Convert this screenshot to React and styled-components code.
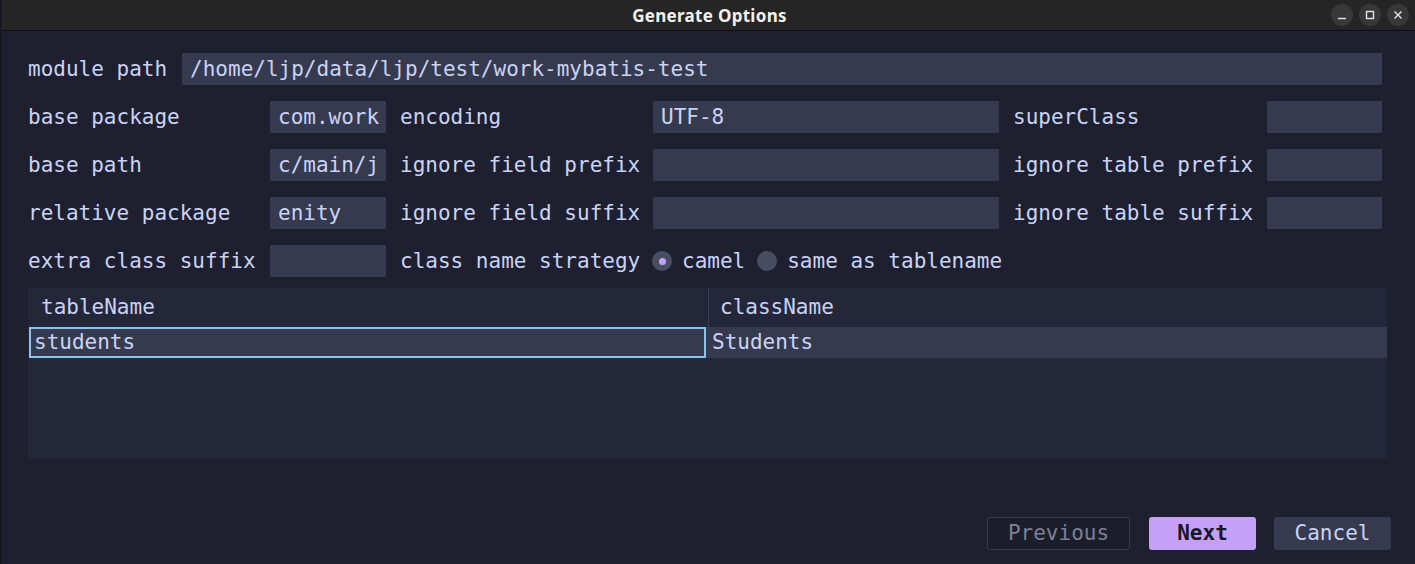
import React from 'react';
import styled, { createGlobalStyle, css } from 'styled-components';

const GlobalStyle = createGlobalStyle`
  html, body {
    margin: 0;
    padding: 0;
    background: #1e2030;
  }
  * { box-sizing: border-box; }
`;

const mono = `"DejaVu Sans Mono", "Liberation Mono", monospace`;

export default function App() {
  return (
    <>
      <GlobalStyle />
      <Window>
        <TitleBar>
          <Title>Generate Options</Title>
          <Controls>
            <Ctrl aria-label="minimize">
              <svg width="10" height="10" viewBox="0 0 10 10"><path d="M1 8.5h8" stroke="#e6e6e6" strokeWidth="1.4" /></svg>
            </Ctrl>
            <Ctrl aria-label="maximize">
              <svg width="10" height="10" viewBox="0 0 10 10"><rect x="1.5" y="1.5" width="7" height="7" fill="none" stroke="#e6e6e6" strokeWidth="1.4" /></svg>
            </Ctrl>
            <Ctrl aria-label="close">
              <svg width="10" height="10" viewBox="0 0 10 10"><path d="M1.5 1.5l7 7M8.5 1.5l-7 7" stroke="#e6e6e6" strokeWidth="1.4" /></svg>
            </Ctrl>
          </Controls>
        </TitleBar>

        <Body>
          {/* Module path */}
          <PathRow>
            <Label>module path</Label>
            <Field>/home/ljp/data/ljp/test/work-mybatis-test</Field>
          </PathRow>

          {/* Option grid */}
          <OptionGrid>
            <Label>base package</Label>
            <Field>com.work</Field>
            <Label>encoding</Label>
            <Field>UTF-8</Field>
            <Label>superClass</Label>
            <Field />

            <Label>base path</Label>
            <Field>c/main/j</Field>
            <Label>ignore field prefix</Label>
            <Field />
            <Label>ignore table prefix</Label>
            <Field />

            <Label>relative package</Label>
            <Field>enity</Field>
            <Label>ignore field suffix</Label>
            <Field />
            <Label>ignore table suffix</Label>
            <Field />

            <Label>extra class suffix</Label>
            <Field />
            <Label>class name strategy</Label>
            <RadioGroup>
              <Radio>
                <Dot checked />
                camel
              </Radio>
              <Radio>
                <Dot />
                same as tablename
              </Radio>
            </RadioGroup>
          </OptionGrid>

          {/* Table */}
          <Table>
            <HeaderRow>
              <HeaderCell>tableName</HeaderCell>
              <HeaderCell divider>className</HeaderCell>
            </HeaderRow>
            <DataRow>
              <DataCell selected>students</DataCell>
              <DataCell>Students</DataCell>
            </DataRow>
          </Table>

          {/* Footer */}
          <Footer>
            <Button variant="disabled">Previous</Button>
            <Button variant="primary">Next</Button>
            <Button>Cancel</Button>
          </Footer>
        </Body>
      </Window>
    </>
  );
}

const Window = styled.div`
  width: 1415px;
  height: 564px;
  display: flex;
  flex-direction: column;
  background: #1e2030;
  border-left: 2px solid #16171f;
  color: #cad3f5;
  font-family: ${mono};
  font-size: 21px;
  overflow: hidden;
`;

const TitleBar = styled.div`
  position: relative;
  height: 31px;
  flex: none;
  display: flex;
  align-items: center;
  justify-content: center;
  background: #252525;
  border-bottom: 1px solid #0e0e0e;
`;

const Title = styled.div`
  font-family: "Noto Sans", "Open Sans", sans-serif;
  font-weight: 700;
  font-size: 17px;
  color: #f2f2f2;
  letter-spacing: 0.3px;
  margin-left: 2px;
`;

const Controls = styled.div`
  position: absolute;
  right: 6px;
  top: 4px;
  display: flex;
  gap: 6px;
`;

const Ctrl = styled.div`
  width: 22px;
  height: 22px;
  border-radius: 50%;
  background: #383838;
  display: flex;
  align-items: center;
  justify-content: center;
`;

const Body = styled.div`
  flex: 1;
  display: flex;
  flex-direction: column;
  padding: 22px 22px 14px 26px;
`;

const PathRow = styled.div`
  display: flex;
  align-items: center;
  gap: 15px;
  height: 32px;
  padding-right: 11px;

  & > div:last-child {
    flex: 1;
  }
`;

const Label = styled.div`
  white-space: nowrap;
  line-height: 32px;
`;

const Field = styled.div`
  height: 32px;
  line-height: 32px;
  padding: 0 8px;
  background: #363a4f;
  border-radius: 1px;
  white-space: nowrap;
  overflow: hidden;
`;

const OptionGrid = styled.div`
  display: grid;
  grid-template-columns: 228px 116px 239px 346px 240px 115px;
  column-gap: 14px;
  row-gap: 16px;
  margin-top: 16px;
  align-items: center;
`;

const RadioGroup = styled.div`
  grid-column: 4 / span 3;
  display: flex;
  align-items: center;
  gap: 12px;
  margin-left: -1px;
`;

const Radio = styled.div`
  display: flex;
  align-items: center;
  gap: 10px;
  line-height: 32px;
`;

const Dot = styled.span`
  width: 20px;
  height: 20px;
  border-radius: 50%;
  background: #494d64;
  display: inline-flex;
  align-items: center;
  justify-content: center;

  ${({ checked }) => checked && css`
    &::after {
      content: '';
      width: 7px;
      height: 7px;
      border-radius: 50%;
      background: #c6a0f6;
    }
  `}
`;

const Table = styled.div`
  margin-top: 11px;
  margin-right: 6px;
  height: 170px;
  background: #24273a;
  display: flex;
  flex-direction: column;
`;

const HeaderRow = styled.div`
  display: grid;
  grid-template-columns: 680px 1fr;
  height: 39px;
  align-items: center;
`;

const HeaderCell = styled.div`
  padding-left: 13px;
  line-height: 39px;
  ${({ divider }) => divider && css`
    border-left: 1px solid #3a3e52;
    padding-left: 11px;
  `}
`;

const DataRow = styled.div`
  display: grid;
  grid-template-columns: 677px 1fr;
  height: 31px;
  background: #363a4f;
  margin-left: 1px;
`;

const DataCell = styled.div`
  line-height: 27px;
  padding-left: 4px;
  border: 2px solid transparent;
  ${({ selected }) => selected && css`
    border-color: #8bc3f0;
    padding-left: 3px;
  `}
`;

const Footer = styled.div`
  margin-top: auto;
  display: flex;
  justify-content: flex-end;
  gap: 18px;
  margin-right: 2px;
`;

const Button = styled.div`
  height: 33px;
  line-height: 33px;
  width: 117px;
  text-align: center;
  border-radius: 3px;
  background: #363a4f;
  color: #cad3f5;

  ${({ variant }) => variant === 'disabled' && css`
    width: 143px;
    background: #1b1d2b;
    border: 1px solid #363a4f;
    line-height: 31px;
    color: #7b8096;
    margin-right: 1px;
  `}

  ${({ variant }) => variant === 'primary' && css`
    width: 107px;
    background: #c6a0f6;
    color: #181926;
    font-weight: 700;
  `}
`;
